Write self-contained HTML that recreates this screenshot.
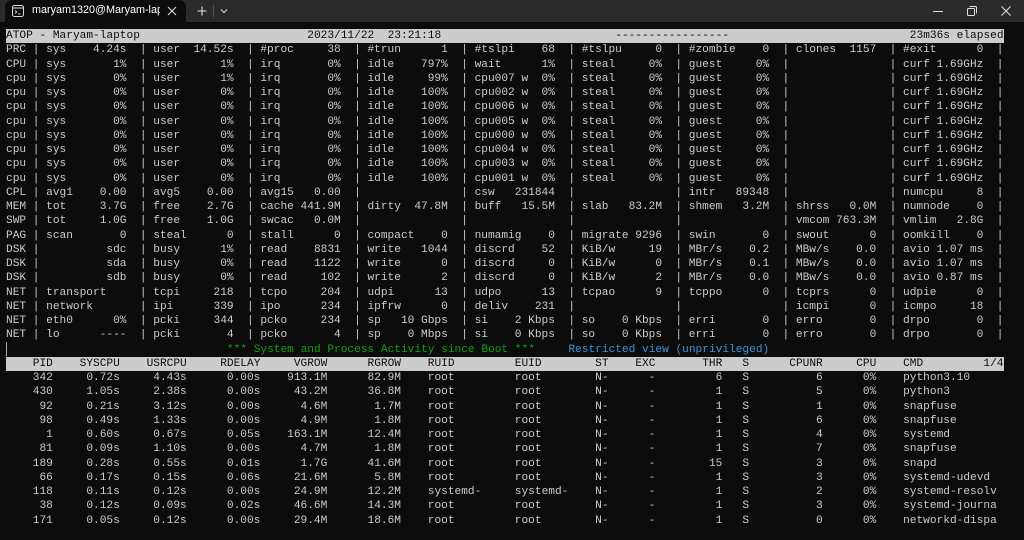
<!DOCTYPE html>
<html><head><meta charset="utf-8">
<style>
*{box-sizing:border-box}
body{margin:0;width:1024px;height:540px;background:#0c0c0c;overflow:hidden;position:relative;font-family:"Liberation Mono",monospace;font-size:11.17px;color:#cccccc}
#tb{position:absolute;left:0;top:0;width:1024px;height:22px;background:#2b2b2b}
#tab{position:absolute;left:5px;top:0;width:181px;height:22px;background:#0c0c0c;border-radius:7px 7px 0 0}
#tab .tt{position:absolute;left:27px;top:4px;width:128px;overflow:hidden;white-space:nowrap;font-family:"Liberation Sans",sans-serif;font-size:10.8px;color:#fff}
#t{position:absolute;left:6px;top:29px}
.r{height:14.26px;line-height:14.26px;white-space:pre;position:relative;width:149ch;display:flex}
.r u{text-decoration:none;display:block;width:4ch;flex:none}
.r s{text-decoration:none;display:block;width:16ch;position:relative;height:14.26px;flex:none}
.r s::before{content:"|";position:absolute;left:0}
.r s i{font-style:normal;position:absolute;left:2ch}
.r s b{font-weight:normal;position:absolute;right:2ch}
.hd{background:#cccccc;color:#0c0c0c}
.g{color:#13a10e}.bl{color:#3a96dd}
.p{height:14.26px;line-height:14.26px;white-space:pre;position:relative;width:149ch}
.p span{position:absolute;top:0}
.a{left:0;width:7ch;text-align:right}
.b{left:7ch;width:10ch;text-align:right}
.c{left:17ch;width:10ch;text-align:right}
.d{left:28ch;width:10ch;text-align:right}
.e{left:38ch;width:10ch;text-align:right}
.f{left:49ch;width:10ch;text-align:right}
.g1{left:63ch}.h{left:76ch}.i{left:88ch}
.j{left:94ch;width:3ch;text-align:right}
.k{left:100ch;width:7ch;text-align:right}
.l{left:110ch}
.m{left:112ch;width:10ch;text-align:right}
.n{left:124ch;width:6ch;text-align:right}
.o{left:134ch}
.q{left:143ch;width:6ch;text-align:right}
</style></head><body>
<div id="tb">
 <div id="tab">
  <svg style="position:absolute;left:7px;top:5px" width="12" height="12" viewBox="0 0 12 12"><rect x="0.5" y="0.5" width="11" height="11" rx="2" fill="none" stroke="#ddd" stroke-width="1"/><line x1="0.5" y1="3" x2="11.5" y2="3" stroke="#ddd"/><path d="M3 5.5l1.8 1.5L3 8.5" fill="none" stroke="#ddd" stroke-width="0.9"/><line x1="6" y1="9" x2="8.5" y2="9" stroke="#ddd" stroke-width="0.9"/></svg>
  <div class="tt">maryam1320@Maryam-laptop</div>
  <svg style="position:absolute;left:162px;top:6px" width="10" height="10" viewBox="0 0 10 10"><path d="M1 1L9 9M9 1L1 9" stroke="#ddd" stroke-width="1.1"/></svg>
 </div>
 <svg style="position:absolute;left:197px;top:6px" width="10" height="10" viewBox="0 0 10 10"><path d="M5 0.5V9.5M0.5 5H9.5" stroke="#ddd" stroke-width="1.1"/></svg>
 <div style="position:absolute;left:213px;top:5px;width:1px;height:12px;background:#555"></div>
 <svg style="position:absolute;left:220px;top:8px" width="8" height="6" viewBox="0 0 8 6"><path d="M1 1.5L4 4.5L7 1.5" fill="none" stroke="#ddd" stroke-width="1"/></svg>
 <div style="position:absolute;left:933px;top:11px;width:10px;height:1px;background:#ddd"></div>
 <svg style="position:absolute;left:967px;top:6px" width="10" height="10" viewBox="0 0 10 10"><rect x="0.5" y="2.5" width="7" height="7" rx="1" fill="none" stroke="#ddd"/><path d="M2.5 0.5H8.5a1 1 0 0 1 1 1V7.5" fill="none" stroke="#ddd"/></svg>
 <svg style="position:absolute;left:1001px;top:6px" width="10" height="10" viewBox="0 0 10 10"><path d="M0.5 0.5L9.5 9.5M9.5 0.5L0.5 9.5" stroke="#ddd" stroke-width="1.1"/></svg>
</div>
<div style="position:absolute;left:6px;top:342px;width:1px;height:14px;background:#aaa"></div>
<div id="t">
<div class="r hd">ATOP - Maryam-laptop                         2023/11/22  23:21:18                          -----------------                           23m36s elapsed</div>
<div class="r"><u>PRC </u><s><i>sys</i><b>4.24s</b></s><s><i>user</i><b>14.52s</b></s><s><i>#proc</i><b>38</b></s><s><i>#trun</i><b>1</b></s><s><i>#tslpi</i><b>68</b></s><s><i>#tslpu</i><b>0</b></s><s><i>#zombie</i><b>0</b></s><s><i>clones</i><b>1157</b></s><s><i>#exit</i><b>0</b></s><span>|</span></div>
<div class="r"><u>CPU </u><s><i>sys</i><b>1%</b></s><s><i>user</i><b>1%</b></s><s><i>irq</i><b>0%</b></s><s><i>idle</i><b>797%</b></s><s><i>wait</i><b>1%</b></s><s><i>steal</i><b>0%</b></s><s><i>guest</i><b>0%</b></s><s></s><s><i>curf</i><b>1.69GHz</b></s><span>|</span></div>
<div class="r"><u>cpu </u><s><i>sys</i><b>0%</b></s><s><i>user</i><b>1%</b></s><s><i>irq</i><b>0%</b></s><s><i>idle</i><b>99%</b></s><s><i>cpu007 w</i><b>0%</b></s><s><i>steal</i><b>0%</b></s><s><i>guest</i><b>0%</b></s><s></s><s><i>curf</i><b>1.69GHz</b></s><span>|</span></div>
<div class="r"><u>cpu </u><s><i>sys</i><b>0%</b></s><s><i>user</i><b>0%</b></s><s><i>irq</i><b>0%</b></s><s><i>idle</i><b>100%</b></s><s><i>cpu002 w</i><b>0%</b></s><s><i>steal</i><b>0%</b></s><s><i>guest</i><b>0%</b></s><s></s><s><i>curf</i><b>1.69GHz</b></s><span>|</span></div>
<div class="r"><u>cpu </u><s><i>sys</i><b>0%</b></s><s><i>user</i><b>0%</b></s><s><i>irq</i><b>0%</b></s><s><i>idle</i><b>100%</b></s><s><i>cpu006 w</i><b>0%</b></s><s><i>steal</i><b>0%</b></s><s><i>guest</i><b>0%</b></s><s></s><s><i>curf</i><b>1.69GHz</b></s><span>|</span></div>
<div class="r"><u>cpu </u><s><i>sys</i><b>0%</b></s><s><i>user</i><b>0%</b></s><s><i>irq</i><b>0%</b></s><s><i>idle</i><b>100%</b></s><s><i>cpu005 w</i><b>0%</b></s><s><i>steal</i><b>0%</b></s><s><i>guest</i><b>0%</b></s><s></s><s><i>curf</i><b>1.69GHz</b></s><span>|</span></div>
<div class="r"><u>cpu </u><s><i>sys</i><b>0%</b></s><s><i>user</i><b>0%</b></s><s><i>irq</i><b>0%</b></s><s><i>idle</i><b>100%</b></s><s><i>cpu000 w</i><b>0%</b></s><s><i>steal</i><b>0%</b></s><s><i>guest</i><b>0%</b></s><s></s><s><i>curf</i><b>1.69GHz</b></s><span>|</span></div>
<div class="r"><u>cpu </u><s><i>sys</i><b>0%</b></s><s><i>user</i><b>0%</b></s><s><i>irq</i><b>0%</b></s><s><i>idle</i><b>100%</b></s><s><i>cpu004 w</i><b>0%</b></s><s><i>steal</i><b>0%</b></s><s><i>guest</i><b>0%</b></s><s></s><s><i>curf</i><b>1.69GHz</b></s><span>|</span></div>
<div class="r"><u>cpu </u><s><i>sys</i><b>0%</b></s><s><i>user</i><b>0%</b></s><s><i>irq</i><b>0%</b></s><s><i>idle</i><b>100%</b></s><s><i>cpu003 w</i><b>0%</b></s><s><i>steal</i><b>0%</b></s><s><i>guest</i><b>0%</b></s><s></s><s><i>curf</i><b>1.69GHz</b></s><span>|</span></div>
<div class="r"><u>cpu </u><s><i>sys</i><b>0%</b></s><s><i>user</i><b>0%</b></s><s><i>irq</i><b>0%</b></s><s><i>idle</i><b>100%</b></s><s><i>cpu001 w</i><b>0%</b></s><s><i>steal</i><b>0%</b></s><s><i>guest</i><b>0%</b></s><s></s><s><i>curf</i><b>1.69GHz</b></s><span>|</span></div>
<div class="r"><u>CPL </u><s><i>avg1</i><b>0.00</b></s><s><i>avg5</i><b>0.00</b></s><s><i>avg15</i><b>0.00</b></s><s></s><s><i>csw</i><b>231844</b></s><s></s><s><i>intr</i><b>89348</b></s><s></s><s><i>numcpu</i><b>8</b></s><span>|</span></div>
<div class="r"><u>MEM </u><s><i>tot</i><b>3.7G</b></s><s><i>free</i><b>2.7G</b></s><s><i>cache</i><b>441.9M</b></s><s><i>dirty</i><b>47.8M</b></s><s><i>buff</i><b>15.5M</b></s><s><i>slab</i><b>83.2M</b></s><s><i>shmem</i><b>3.2M</b></s><s><i>shrss</i><b>0.0M</b></s><s><i>numnode</i><b>0</b></s><span>|</span></div>
<div class="r"><u>SWP </u><s><i>tot</i><b>1.0G</b></s><s><i>free</i><b>1.0G</b></s><s><i>swcac</i><b>0.0M</b></s><s></s><s></s><s></s><s></s><s><i>vmcom</i><b>763.3M</b></s><s><i>vmlim</i><b>2.8G</b></s><span>|</span></div>
<div class="r"><u>PAG </u><s><i>scan</i><b>0</b></s><s><i>steal</i><b>0</b></s><s><i>stall</i><b>0</b></s><s><i>compact</i><b>0</b></s><s><i>numamig</i><b>0</b></s><s><i>migrate</i><b>9296</b></s><s><i>swin</i><b>0</b></s><s><i>swout</i><b>0</b></s><s><i>oomkill</i><b>0</b></s><span>|</span></div>
<div class="r"><u>DSK </u><s><b>sdc</b></s><s><i>busy</i><b>1%</b></s><s><i>read</i><b>8831</b></s><s><i>write</i><b>1044</b></s><s><i>discrd</i><b>52</b></s><s><i>KiB/w</i><b>19</b></s><s><i>MBr/s</i><b>0.2</b></s><s><i>MBw/s</i><b>0.0</b></s><s><i>avio</i><b>1.07 ms</b></s><span>|</span></div>
<div class="r"><u>DSK </u><s><b>sda</b></s><s><i>busy</i><b>0%</b></s><s><i>read</i><b>1122</b></s><s><i>write</i><b>0</b></s><s><i>discrd</i><b>0</b></s><s><i>KiB/w</i><b>0</b></s><s><i>MBr/s</i><b>0.1</b></s><s><i>MBw/s</i><b>0.0</b></s><s><i>avio</i><b>1.07 ms</b></s><span>|</span></div>
<div class="r"><u>DSK </u><s><b>sdb</b></s><s><i>busy</i><b>0%</b></s><s><i>read</i><b>102</b></s><s><i>write</i><b>2</b></s><s><i>discrd</i><b>0</b></s><s><i>KiB/w</i><b>2</b></s><s><i>MBr/s</i><b>0.0</b></s><s><i>MBw/s</i><b>0.0</b></s><s><i>avio</i><b>0.87 ms</b></s><span>|</span></div>
<div class="r"><u>NET </u><s><i>transport</i></s><s><i>tcpi</i><b>218</b></s><s><i>tcpo</i><b>204</b></s><s><i>udpi</i><b>13</b></s><s><i>udpo</i><b>13</b></s><s><i>tcpao</i><b>9</b></s><s><i>tcppo</i><b>0</b></s><s><i>tcprs</i><b>0</b></s><s><i>udpie</i><b>0</b></s><span>|</span></div>
<div class="r"><u>NET </u><s><i>network</i></s><s><i>ipi</i><b>339</b></s><s><i>ipo</i><b>234</b></s><s><i>ipfrw</i><b>0</b></s><s><i>deliv</i><b>231</b></s><s></s><s></s><s><i>icmpi</i><b>0</b></s><s><i>icmpo</i><b>18</b></s><span>|</span></div>
<div class="r"><u>NET </u><s><i>eth0</i><b>0%</b></s><s><i>pcki</i><b>344</b></s><s><i>pcko</i><b>234</b></s><s><i>sp</i><b>10 Gbps</b></s><s><i>si</i><b>2 Kbps</b></s><s><i>so</i><b>0 Kbps</b></s><s><i>erri</i><b>0</b></s><s><i>erro</i><b>0</b></s><s><i>drpo</i><b>0</b></s><span>|</span></div>
<div class="r"><u>NET </u><s><i>lo</i><b>----</b></s><s><i>pcki</i><b>4</b></s><s><i>pcko</i><b>4</b></s><s><i>sp</i><b>0 Mbps</b></s><s><i>si</i><b>0 Kbps</b></s><s><i>so</i><b>0 Kbps</b></s><s><i>erri</i><b>0</b></s><s><i>erro</i><b>0</b></s><s><i>drpo</i><b>0</b></s><span>|</span></div>
<div class="p"><span class="g" style="left:33ch">*** System and Process Activity since Boot ***</span><span class="bl" style="left:84ch">Restricted view (unprivileged)</span></div>
<div class="p hd"><span class="a">PID</span><span class="b">SYSCPU</span><span class="c">USRCPU</span><span class="d">RDELAY</span><span class="e">VGROW</span><span class="f">RGROW</span><span class="g1">RUID</span><span class="h">EUID</span><span class="i">ST</span><span class="j">EXC</span><span class="k">THR</span><span class="l">S</span><span class="m">CPUNR</span><span class="n">CPU</span><span class="o">CMD</span><span class="q">1/4</span></div>
<div class="p"><span class="a">342</span><span class="b">0.72s</span><span class="c">4.43s</span><span class="d">0.00s</span><span class="e">913.1M</span><span class="f">82.9M</span><span class="g1">root</span><span class="h">root</span><span class="i">N-</span><span class="j">-</span><span class="k">6</span><span class="l">S</span><span class="m">6</span><span class="n">0%</span><span class="o">python3.10</span></div>
<div class="p"><span class="a">430</span><span class="b">1.05s</span><span class="c">2.38s</span><span class="d">0.00s</span><span class="e">43.2M</span><span class="f">36.8M</span><span class="g1">root</span><span class="h">root</span><span class="i">N-</span><span class="j">-</span><span class="k">1</span><span class="l">S</span><span class="m">5</span><span class="n">0%</span><span class="o">python3</span></div>
<div class="p"><span class="a">92</span><span class="b">0.21s</span><span class="c">3.12s</span><span class="d">0.00s</span><span class="e">4.6M</span><span class="f">1.7M</span><span class="g1">root</span><span class="h">root</span><span class="i">N-</span><span class="j">-</span><span class="k">1</span><span class="l">S</span><span class="m">1</span><span class="n">0%</span><span class="o">snapfuse</span></div>
<div class="p"><span class="a">98</span><span class="b">0.49s</span><span class="c">1.33s</span><span class="d">0.00s</span><span class="e">4.9M</span><span class="f">1.8M</span><span class="g1">root</span><span class="h">root</span><span class="i">N-</span><span class="j">-</span><span class="k">1</span><span class="l">S</span><span class="m">6</span><span class="n">0%</span><span class="o">snapfuse</span></div>
<div class="p"><span class="a">1</span><span class="b">0.60s</span><span class="c">0.67s</span><span class="d">0.05s</span><span class="e">163.1M</span><span class="f">12.4M</span><span class="g1">root</span><span class="h">root</span><span class="i">N-</span><span class="j">-</span><span class="k">1</span><span class="l">S</span><span class="m">4</span><span class="n">0%</span><span class="o">systemd</span></div>
<div class="p"><span class="a">81</span><span class="b">0.09s</span><span class="c">1.10s</span><span class="d">0.00s</span><span class="e">4.7M</span><span class="f">1.8M</span><span class="g1">root</span><span class="h">root</span><span class="i">N-</span><span class="j">-</span><span class="k">1</span><span class="l">S</span><span class="m">7</span><span class="n">0%</span><span class="o">snapfuse</span></div>
<div class="p"><span class="a">189</span><span class="b">0.28s</span><span class="c">0.55s</span><span class="d">0.01s</span><span class="e">1.7G</span><span class="f">41.6M</span><span class="g1">root</span><span class="h">root</span><span class="i">N-</span><span class="j">-</span><span class="k">15</span><span class="l">S</span><span class="m">3</span><span class="n">0%</span><span class="o">snapd</span></div>
<div class="p"><span class="a">66</span><span class="b">0.17s</span><span class="c">0.15s</span><span class="d">0.06s</span><span class="e">21.6M</span><span class="f">5.8M</span><span class="g1">root</span><span class="h">root</span><span class="i">N-</span><span class="j">-</span><span class="k">1</span><span class="l">S</span><span class="m">3</span><span class="n">0%</span><span class="o">systemd-udevd</span></div>
<div class="p"><span class="a">118</span><span class="b">0.11s</span><span class="c">0.12s</span><span class="d">0.00s</span><span class="e">24.9M</span><span class="f">12.2M</span><span class="g1">systemd-</span><span class="h">systemd-</span><span class="i">N-</span><span class="j">-</span><span class="k">1</span><span class="l">S</span><span class="m">2</span><span class="n">0%</span><span class="o">systemd-resolv</span></div>
<div class="p"><span class="a">38</span><span class="b">0.12s</span><span class="c">0.09s</span><span class="d">0.02s</span><span class="e">46.6M</span><span class="f">14.3M</span><span class="g1">root</span><span class="h">root</span><span class="i">N-</span><span class="j">-</span><span class="k">1</span><span class="l">S</span><span class="m">3</span><span class="n">0%</span><span class="o">systemd-journa</span></div>
<div class="p"><span class="a">171</span><span class="b">0.05s</span><span class="c">0.12s</span><span class="d">0.00s</span><span class="e">29.4M</span><span class="f">18.6M</span><span class="g1">root</span><span class="h">root</span><span class="i">N-</span><span class="j">-</span><span class="k">1</span><span class="l">S</span><span class="m">0</span><span class="n">0%</span><span class="o">networkd-dispa</span></div>
</div>
</body></html>
